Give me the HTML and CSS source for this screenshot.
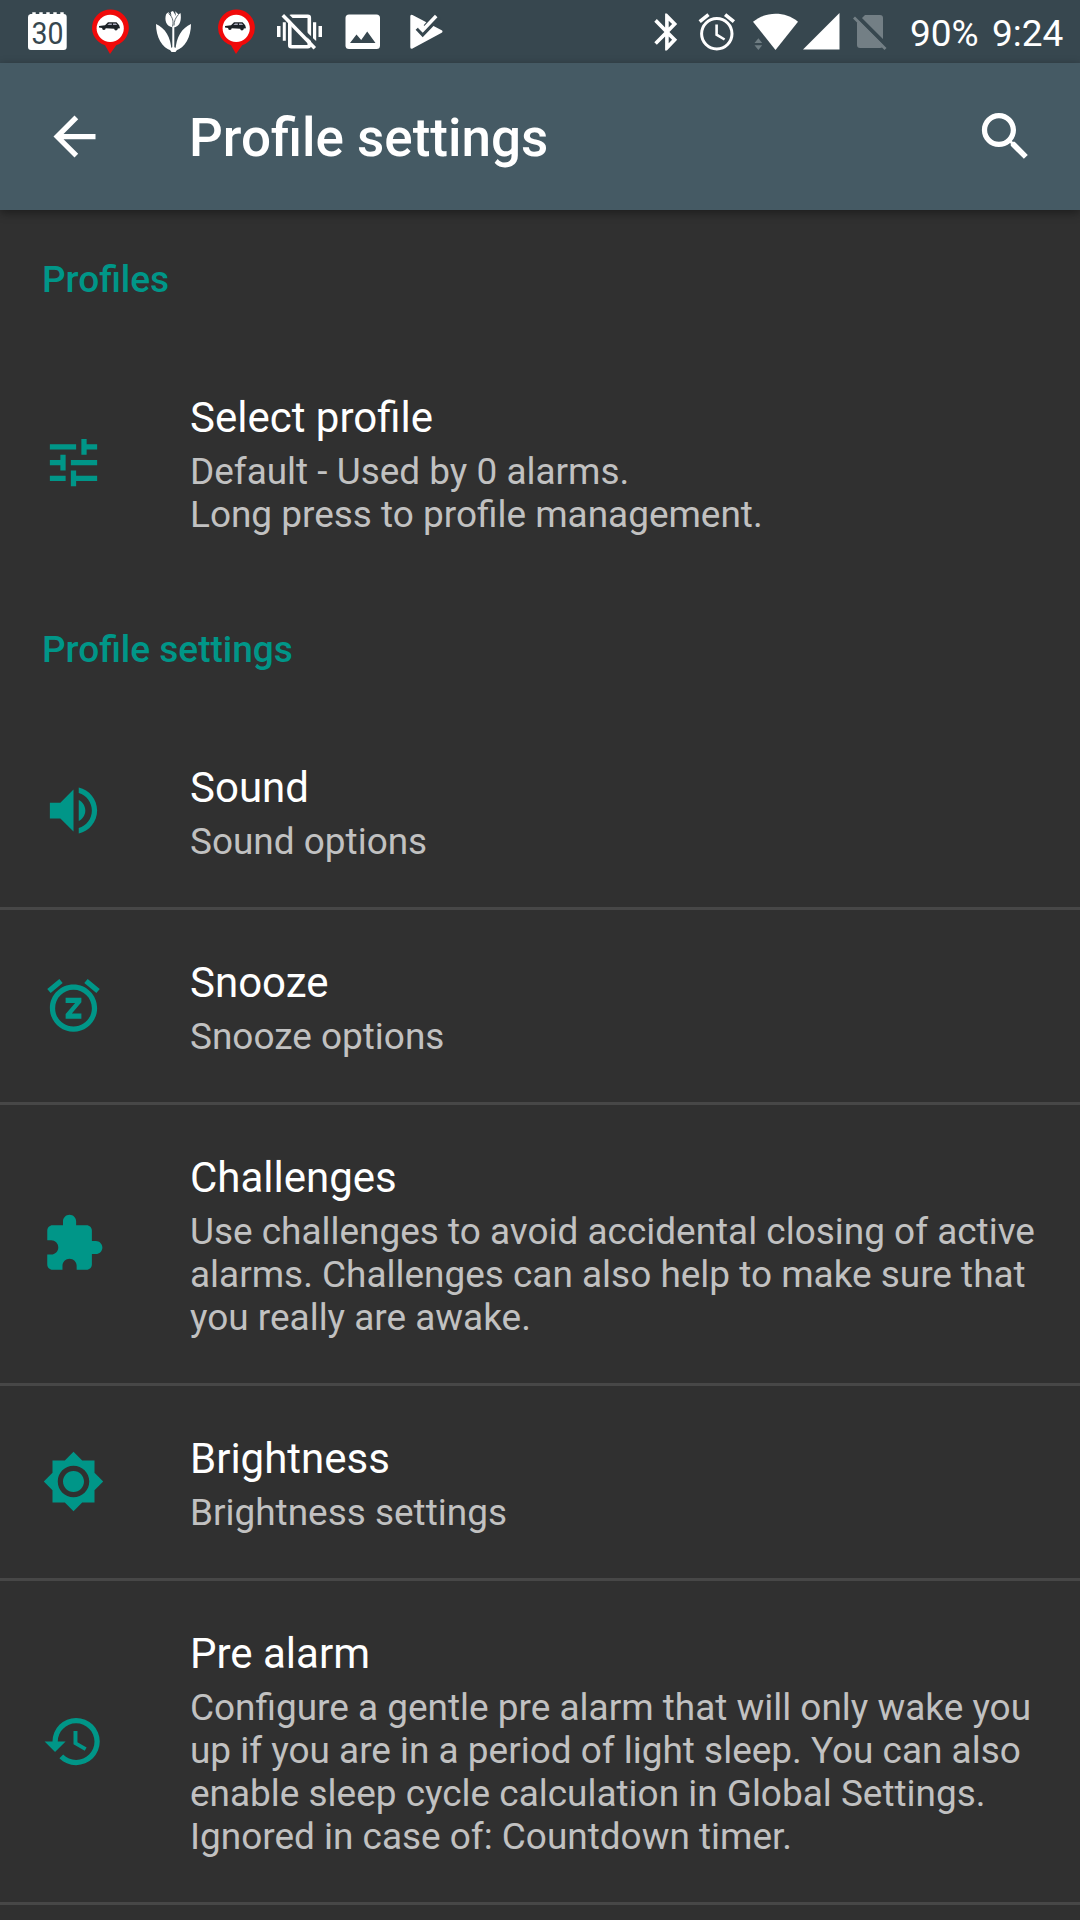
FILE: index.html
```html
<!DOCTYPE html>
<html lang="en">
<head>
    <meta charset="UTF-8">
    <meta name="viewport" content="width=device-width, initial-scale=1.0">
    <title>Profile settings</title>
    <link rel="stylesheet" href="styles.css">
</head>
<body>
    <div class="status-bar">
        <div class="notifications">
            <!-- calendar -->
            <svg width="63" height="63" viewBox="0 0 63 63">
                <path fill="#fff" d="M14.5 14h1.8v-1.7h3.4V14h3.6v-1.7h3.4V14h3.6v-1.7h3.4V14h3.6v-1.7h3.4V14h3.6v-1.7h3.4V14a3 3 0 0 1 3 3v30a3 3 0 0 1-3 3H15a3 3 0 0 1-3-3V17a3 3 0 0 1 2.500-3z"/>
                <text class="calendar-day" x="15.500" y="43.500" textLength="32" lengthAdjust="spacingAndGlyphs">30</text>
            </svg>
            <!-- traffic pin -->
            <svg width="63" height="63" viewBox="0 0 63 63">
                <path fill="#f00a0a" d="M31.200 9.500a18.300 18.300 0 0 1 6 35.700L31 54l-5-8.700A18.300 18.300 0 0 1 31.200 9.500z"/>
                <circle cx="31.200" cy="28.300" r="13.600" fill="#fff"/>
                <path fill="#1c2226" d="M20 26l6-.8 3-3h8.500l2.700 3 .8 3-2.200.3a1.800 1.800 0 0 1-3.600.2l-8.500-.4a1.800 1.800 0 0 1-3.600-.2L20 27.600z"/>
                <path fill="#aab" d="M28.300 25l1.800-1.600h2.700V25zM34 23.400h2.800L38.200 25H34z"/>
            </svg>
            <!-- tulip -->
            <svg width="63" height="63" viewBox="0 0 63 63">
                <path fill="#fff" d="M24 14.500c1-1.300 2-2 2.500-2.200L29.500 16l-.8-4 2.300-1 3 5-.8-4.700 3.300 3.200 2-1.500c1 6 .4 14-7.400 14.500-7.600-1-8.600-8-7.100-13z"/>
                <path fill="none" stroke="#37474f" stroke-width=".8" d="M26.500 13.500c5 4 5 9 4 13M36.500 14.500c-3 3-4.500 7-4.500 11"/>
                <path fill="none" stroke="#fff" stroke-width="2" d="M31.300 27v22"/>
                <path fill="#fff" d="M14 24c9 4 15 13 15.500 26.500C20 48 14 37 14 24zM49 24c-9 4-15 13-15.500 26.500C43 48 49 37 49 24z"/>
                <path fill="#fff" d="M27 48.500l4.300-1.500 4.700 1.500-2.500 3.500h-4z"/>
            </svg>
            <!-- traffic pin -->
            <svg width="63" height="63" viewBox="0 0 63 63">
                <path fill="#f00a0a" d="M31.200 9.500a18.300 18.300 0 0 1 6 35.700L31 54l-5-8.700A18.300 18.300 0 0 1 31.200 9.500z"/>
                <circle cx="31.200" cy="28.300" r="13.600" fill="#fff"/>
                <path fill="#1c2226" d="M20 26l6-.8 3-3h8.500l2.700 3 .8 3-2.200.3a1.800 1.800 0 0 1-3.600.2l-8.500-.4a1.800 1.800 0 0 1-3.600-.2L20 27.600z"/>
                <path fill="#aab" d="M28.300 25l1.800-1.600h2.700V25zM34 23.400h2.800L38.200 25H34z"/>
            </svg>
            <!-- vibration off -->
            <svg width="63" height="63" viewBox="0 0 63 63">
                <rect x="21.800" y="16.300" width="19.500" height="30.500" rx="1.500" fill="none" stroke="#fff" stroke-width="3.600"/>
                <path fill="#fff" d="M9 26h3.500v11H9zM14.800 22.300h3v18.500h-3zM45 22.300h3.200v18.500H45zM50.500 26h3.500v11h-3.500z"/>
                <path stroke="#37474f" stroke-width="3.500" d="M17.500 13.500l32 31.500"/>
                <path stroke="#fff" stroke-width="3.500" d="M14.800 15.300l32 33"/>
            </svg>
            <!-- picture -->
            <svg width="63" height="63" viewBox="0 0 63 63">
                <rect x="14.500" y="14.500" width="34.500" height="34.500" rx="3.500" fill="#fff"/>
                <path fill="#37474f" d="M19 43l6.500-8.500 4.700 5.500 6-8.500L44.500 43z"/>
            </svg>
            <!-- play store update -->
            <svg width="63" height="63" viewBox="0 0 63 63">
                <path fill="#fff" stroke="#fff" stroke-width="3" stroke-linejoin="round" d="M17.800 16.300v31L47 31.500z"/>
                <path fill="none" stroke="#37474f" stroke-width="3.500" d="M31 26.500l9.500-11"/>
                <path fill="none" stroke="#37474f" stroke-width="3.800" d="M23 28.500l5.700 6L45.500 17"/>
                <path fill="none" stroke="#fff" stroke-width="3.500" d="M25 26.500l3.700 3.700 13.500-14.200"/>
            </svg>
        </div>
        <div class="system-icons">
            <!-- bluetooth -->
            <svg width="52" height="63" viewBox="0 0 52 63">
                <path fill="#fff" transform="translate(5.300 9.900) scale(1.800 1.840)" d="M17.710 7.710L12 2h-1v7.590L6.410 5 5 6.410 10.590 12 5 17.590 6.410 19 11 14.410V22h1l5.710-5.710-4.300-4.290 4.300-4.290zM13 5.830l1.880 1.880L13 9.590V5.830zm1.880 10.460L13 18.170v-3.760l1.880 1.880z"/>
            </svg>
            <!-- alarm -->
            <svg width="51" height="63" viewBox="0 0 51 63">
                <g fill="none" stroke="#fff" stroke-width="3">
                    <circle cx="24.800" cy="33.800" r="15.200"/>
                    <path stroke-width="3.600" d="M7.700 21.700l8.800-7M41.900 21.700l-8.800-7"/>
                    <path stroke-width="2.600" d="M24.600 24.500v10.200l8 4.800"/>
                </g>
            </svg>
            <!-- wifi -->
            <svg width="58" height="63" viewBox="0 0 58 63">
                <path fill="#fff" d="M32.500 50L10 21.700c13-10.600 32-10.600 45 0z"/>
                <path fill="#6f7d83" d="M11.500 43h7.700l-3.800-4.800zM11.500 45.200h7.700l-3.800 4.800z"/>
            </svg>
            <!-- signal -->
            <svg width="44" height="63" viewBox="0 0 44 63">
                <path fill="#fff" d="M2 49.500L38.500 13v36.500z"/>
            </svg>
            <!-- no sim -->
            <svg width="50" height="63" viewBox="0 0 50 63">
                <path fill="#737f85" d="M12 23l8-8h15a3 3 0 0 1 3 3v27a3 3 0 0 1-3 3H15a3 3 0 0 1-3-3z"/>
                <path stroke="#37474f" stroke-width="4" d="M11.500 15.500l30 30"/>
                <path stroke="#737f85" stroke-width="2.800" d="M9 17.500l31.500 31.500"/>
            </svg>
        </div>
        <span class="battery">90%</span>
        <span class="clock">9:24</span>
    </div>

    <div class="toolbar">
        <svg class="toolbar-icon" viewBox="0 0 24 24">
            <path d="M20 11H7.830l5.590-5.590L12 4l-8 8 8 8 1.410-1.410L7.830 13H20v-2z"/>
        </svg>
        <h1>Profile settings</h1>
        <svg class="toolbar-icon" viewBox="0 0 24 24">
            <path d="M15.500 14h-.79l-.28-.27C15.410 12.590 16 11.110 16 9.500 16 5.910 13.090 3 9.500 3S3 5.910 3 9.500 5.910 16 9.500 16c1.610 0 3.090-.59 4.230-1.570l.27.28v.79l5 4.990L20.490 19l-4.990-5zm-6 0C7.010 14 5 11.990 5 9.500S7.010 5 9.500 5 14 7.010 14 9.500 11.990 14 9.500 14z"/>
        </svg>
    </div>

    <div class="settings">
        <h2>Profiles</h2>
        <div class="item">
            <svg class="item-icon" viewBox="0 0 24 24">
                <path d="M3 17v2h6v-2H3zM3 5v2h10V5H3zm10 16v-2h8v-2h-8v-2h-2v6h2zM7 9v2H3v2h4v2h2V9H7zm14 4v-2H11v2h10zm-6-4h2V7h4V5h-4V3h-2v6z"/>
            </svg>
            <div class="item-text">
                <h3>Select profile</h3>
                <p>Default - Used by 0 alarms.<br>Long press to profile management.</p>
            </div>
        </div>

        <h2>Profile settings</h2>
        <div class="item divided">
            <svg class="item-icon" viewBox="0 0 24 24">
                <path d="M3 9v6h4l5 5V4L7 9H3zm13.500 3c0-1.770-1.020-3.290-2.500-4.030v8.050c1.480-.73 2.500-2.250 2.500-4.020zM14 3.230v2.060c2.890.86 5 3.540 5 6.710s-2.110 5.850-5 6.710v2.060c4.010-.91 7-4.490 7-8.770s-2.990-7.860-7-8.770z"/>
            </svg>
            <div class="item-text">
                <h3>Sound</h3>
                <p>Sound options</p>
            </div>
        </div>
        <div class="item divided">
            <svg class="item-icon" viewBox="0 0 24 24">
                <path d="M7.880 3.390L6.600 1.860 2 5.710l1.290 1.530 4.590-3.850zM22 5.720l-4.600-3.860-1.290 1.530 4.600 3.860L22 5.720zM12 4c-4.970 0-9 4.030-9 9s4.020 9 9 9c4.970 0 9-4.030 9-9s-4.030-9-9-9zm0 16c-3.870 0-7-3.130-7-7s3.130-7 7-7 7 3.130 7 7-3.130 7-7 7zm-3-9h3.630L9 15.200V17h6v-2h-3.630L15 10.800V9H9v2z"/>
            </svg>
            <div class="item-text">
                <h3>Snooze</h3>
                <p>Snooze options</p>
            </div>
        </div>
        <div class="item divided">
            <svg class="item-icon" viewBox="0 0 24 24">
                <path d="M20.500 11H19V7c0-1.100-.9-2-2-2h-4V3.500C13 2.120 11.880 1 10.500 1S8 2.120 8 3.500V5H4c-1.100 0-1.990.9-1.990 2v3.800H3.500c1.490 0 2.700 1.210 2.700 2.700s-1.210 2.700-2.700 2.700H2V20c0 1.100.9 2 2 2h3.800v-1.500c0-1.490 1.210-2.700 2.700-2.700 1.490 0 2.700 1.210 2.700 2.700V22H17c1.100 0 2-.9 2-2v-4h1.500c1.380 0 2.500-1.120 2.500-2.500S21.880 11 20.500 11z"/>
            </svg>
            <div class="item-text">
                <h3>Challenges</h3>
                <p>Use challenges to avoid accidental closing of active alarms. Challenges can also help to make sure that you really are awake.</p>
            </div>
        </div>
        <div class="item divided">
            <svg class="item-icon" viewBox="0 0 24 24">
                <path d="M20 8.690V4h-4.690L12 .69 8.690 4H4v4.690L.69 12 4 15.310V20h4.690L12 23.310 15.310 20H20v-4.690L23.310 12 20 8.690zM12 18c-3.310 0-6-2.690-6-6s2.690-6 6-6 6 2.690 6 6-2.690 6-6 6zm0-10c-2.210 0-4 1.790-4 4s1.790 4 4 4 4-1.790 4-4-1.790-4-4-4z"/>
            </svg>
            <div class="item-text">
                <h3>Brightness</h3>
                <p>Brightness settings</p>
            </div>
        </div>
        <div class="item divided">
            <svg class="item-icon" viewBox="0 0 24 24">
                <path d="M13 3a9 9 0 0 0-9 9H1l3.890 3.890.07.14L9 12H6c0-3.870 3.130-7 7-7s7 3.130 7 7-3.130 7-7 7c-1.930 0-3.680-.79-4.940-2.060l-1.420 1.420C8.270 19.990 10.510 21 13 21a9 9 0 0 0 0-18zm-1 5v5l4.280 2.540.72-1.210-3.500-2.080V8H12z"/>
            </svg>
            <div class="item-text">
                <h3>Pre alarm</h3>
                <p>Configure a gentle pre alarm that will only wake you up if you are in a period of light sleep. You can also enable sleep cycle calculation in Global Settings.<br>Ignored in case of: Countdown timer.</p>
            </div>
        </div>
    </div>
</body>
</html>
```
FILE: styles.css
```css
* {
    box-sizing: border-box;
    margin: 0;
    padding: 0;
}

body {
    width: 1080px;
    height: 1920px;
    overflow: hidden;
    background-color: #303030;
    font-family: Roboto, sans-serif;
    color: #fff;
}

svg {
    display: block;
    flex-shrink: 0;
}

/* Status bar */
.status-bar {
    display: flex;
    height: 63px;
    padding: 0 16px;
    background-color: #37474f;
    font-size: 37px;
    line-height: 67px;
}

.notifications, .system-icons {
    display: flex;
}

.system-icons {
    margin-left: 183px;
}

.calendar-day {
    font-size: 31px;
    font-weight: 400;
    fill: #37474f;
}

.battery {
    width: 82px;
    margin-left: 15px;
}

.clock {
    white-space: nowrap;
}

/* Toolbar */
.toolbar {
    display: flex;
    align-items: center;
    height: 147px;
    padding: 0 43px;
    background-color: #455a64;
    box-shadow: 0 3px 9px rgba(0, 0, 0, 0.4);
}

.toolbar-icon {
    width: 63px;
    height: 63px;
    fill: #fff;
}

.toolbar h1 {
    flex: 1;
    margin-left: 83px;
    padding-top: 2px;
    font-size: 53px;
    font-weight: 500;
    line-height: 62px;
}

/* Settings list */
.settings h2 {
    height: 135px;
    padding: 48px 42px 0;
    color: #009688;
    font-size: 37px;
    font-weight: 500;
    line-height: 43px;
}

.item {
    display: flex;
    align-items: center;
    padding: 0 42px;
}

.divided {
    border-bottom: 3px solid #474747;
}

.item-icon {
    width: 63px;
    height: 63px;
    margin-bottom: 1px;
    fill: #009688;
}

.item-text {
    flex: 1;
    margin-left: 85px;
    padding: 48px 0 44px;
}

.item-text h3 {
    font-size: 42px;
    font-weight: 400;
    line-height: 49px;
}

.item-text p {
    margin-top: 8px;
    color: #c1c1c1;
    font-size: 36.95px;
    line-height: 43px;
}
```
